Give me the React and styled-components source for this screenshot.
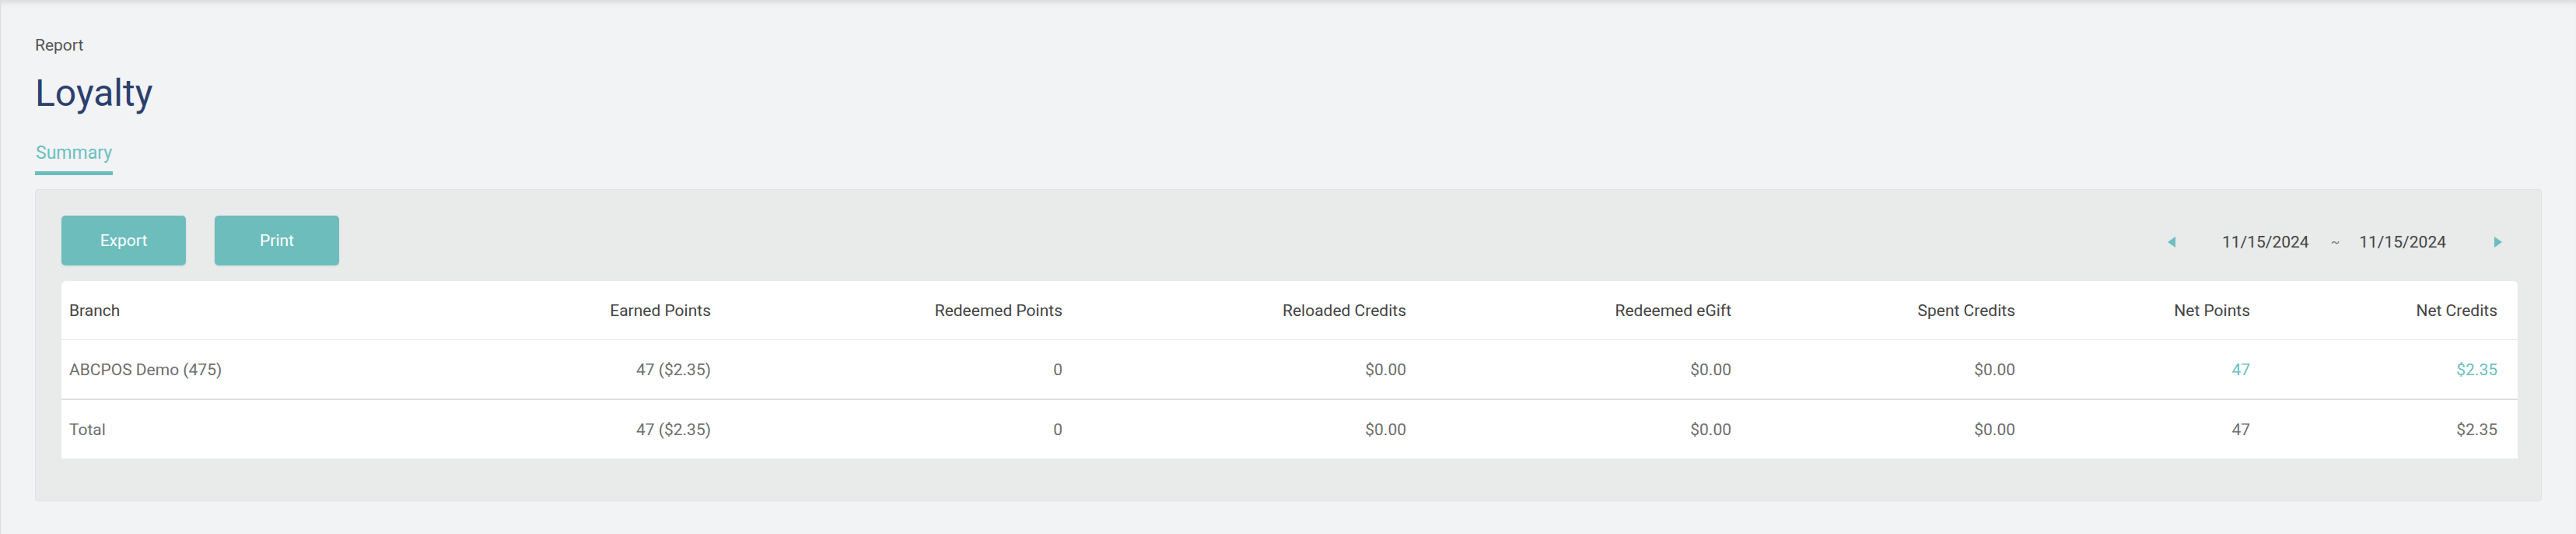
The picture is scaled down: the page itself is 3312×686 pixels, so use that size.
import React from 'react';
import styled, { createGlobalStyle } from 'styled-components';

const GlobalStyle = createGlobalStyle`
    * {
        box-sizing: border-box;
    }

    body {
        margin: 0;
        background: #f2f3f5;
        font-family: Roboto, "Liberation Sans", Arial, sans-serif;
    }
`;

const columns = [
    { key: 'branch', label: 'Branch', width: 430, align: 'left' },
    { key: 'earned', label: 'Earned Points', width: 431 },
    { key: 'redeemed', label: 'Redeemed Points', width: 452 },
    { key: 'reloaded', label: 'Reloaded Credits', width: 442 },
    { key: 'egift', label: 'Redeemed eGift', width: 418 },
    { key: 'spent', label: 'Spent Credits', width: 365 },
    { key: 'netPoints', label: 'Net Points', width: 302, link: true },
    { key: 'netCredits', label: 'Net Credits', width: 318, link: true }
];

const rows = [
    {
        branch: 'ABCPOS Demo (475)',
        earned: '47 ($2.35)',
        redeemed: '0',
        reloaded: '$0.00',
        egift: '$0.00',
        spent: '$0.00',
        netPoints: '47',
        netCredits: '$2.35'
    }
];

const total = {
    branch: 'Total',
    earned: '47 ($2.35)',
    redeemed: '0',
    reloaded: '$0.00',
    egift: '$0.00',
    spent: '$0.00',
    netPoints: '47',
    netCredits: '$2.35'
};

function Arrow({ dir }) {
    return (
        <svg width="10" height="14" viewBox="0 0 10 14">
            {dir === 'left'
                ? <polygon points="10,0 10,14 0,7" fill="#6bbfbf" />
                : <polygon points="0,0 0,14 10,7" fill="#6bbfbf" />}
        </svg>
    );
}

function App() {
    return (
        <PageStyled>
            <GlobalStyle />
            <Crumb>Report</Crumb>
            <Title>Loyalty</Title>
            <Tabs>
                <Tab active>Summary</Tab>
            </Tabs>

            <Panel>
                <Toolbar>
                    <Actions>
                        <ActionButton>Export</ActionButton>
                        <ActionButton>Print</ActionButton>
                    </Actions>
                    <DateNav>
                        <ArrowButton><Arrow dir="left" /></ArrowButton>
                        <DateRange>
                            <DateText>11/15/2024</DateText>
                            <Tilde>~</Tilde>
                            <DateText>11/15/2024</DateText>
                        </DateRange>
                        <ArrowButton><Arrow dir="right" /></ArrowButton>
                    </DateNav>
                </Toolbar>

                <Table>
                    <colgroup>
                        {columns.map(c => <col key={c.key} style={{ width: c.width }} />)}
                    </colgroup>
                    <thead>
                        <tr>
                            {columns.map(c => (
                                <HeadCell key={c.key} align={c.align}>{c.label}</HeadCell>
                            ))}
                        </tr>
                    </thead>
                    <tbody>
                        {rows.map((r, i) => (
                            <BodyRow key={i}>
                                {columns.map(c => (
                                    <Cell key={c.key} align={c.align} link={c.link}>{r[c.key]}</Cell>
                                ))}
                            </BodyRow>
                        ))}
                        <TotalRow>
                            {columns.map(c => (
                                <Cell key={c.key} align={c.align}>{total[c.key]}</Cell>
                            ))}
                        </TotalRow>
                    </tbody>
                </Table>
            </Panel>
        </PageStyled>
    );
}

const PageStyled = styled.div`
    min-height: 100vh;
    padding: 46px 44px 40px 44px;
    border-left: 1px solid #dcdde0;
    box-shadow: inset 0 7px 8px -5px rgba(0, 0, 0, 0.13);
`;

const Crumb = styled.div`
    font-size: 21px;
    line-height: 24px;
    color: #555;
`;

const Title = styled.h1`
    margin: 22px 0 0;
    font-size: 48px;
    line-height: 56px;
    font-weight: 400;
    color: #2b3f6e;
`;

const Tabs = styled.div`
    display: flex;
    margin-top: 35px;
`;

const Tab = styled.div`
    font-size: 23px;
    line-height: 28px;
    padding: 0 1px 9px;
    color: ${p => p.active ? '#6bbfbf' : '#888'};
    border-bottom: 5px solid ${p => p.active ? '#6bbfbf' : 'transparent'};
`;

const Panel = styled.div`
    margin-top: 18px;
    background: #e9eaea;
    border: 1px solid #e1e2e3;
    border-radius: 4px;
    padding: 33px 31px 54px 33px;
`;

const Toolbar = styled.div`
    display: flex;
    align-items: center;
    justify-content: space-between;
    margin-bottom: 20px;
`;

const Actions = styled.div`
    display: flex;
    gap: 37px;
`;

const ActionButton = styled.button`
    width: 160px;
    height: 64px;
    border: none;
    border-radius: 5px;
    background: #6dbdbd;
    color: #fff;
    font-family: inherit;
    font-size: 21px;
    box-shadow: 0 1px 3px rgba(0, 0, 0, 0.08);
    cursor: pointer;
`;

const DateNav = styled.div`
    display: flex;
    align-items: center;
    margin-top: 4px;
`;

const ArrowButton = styled.div`
    width: 48px;
    height: 40px;
    display: flex;
    align-items: center;
    justify-content: center;
    cursor: pointer;
`;

const DateRange = styled.div`
    display: flex;
    align-items: center;
    padding: 0 43px 0 41px;
`;

const DateText = styled.span`
    font-size: 21px;
    color: #444;
`;

const Tilde = styled.span`
    margin: 0 25px 0 28px;
    font-size: 17px;
    color: #777;
`;

const Table = styled.table`
    width: 100%;
    table-layout: fixed;
    border-collapse: separate;
    border-spacing: 0;
    background: #fff;
    border-radius: 6px 6px 0 0;
    font-size: 21px;
`;

const HeadCell = styled.th`
    height: 76px;
    padding: 0 26px 0 10px;
    font-weight: 400;
    color: #444;
    text-align: ${p => p.align || 'right'};
    border-bottom: 1px solid #e6e6e6;
    white-space: nowrap;
`;

const Cell = styled.td`
    height: 77px;
    padding: 0 26px 0 10px;
    color: ${p => p.link ? '#6bbfbf' : '#6e6e6e'};
    text-align: ${p => p.align || 'right'};
    white-space: nowrap;
`;

const BodyRow = styled.tr`
    td {
        border-bottom: 2px solid #dedede;
    }
`;

const TotalRow = styled.tr`
    td {
        height: 75px;
    }
`;

export default App;
